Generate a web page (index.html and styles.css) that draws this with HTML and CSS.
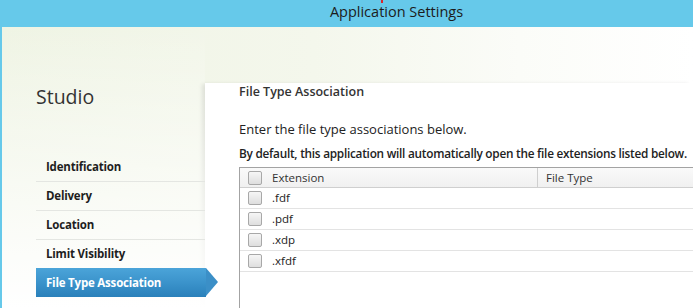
FILE: index.html
```html
<!DOCTYPE html>
<html lang="en">
<head>
    <meta charset="UTF-8">
    <title>Application Settings</title>
    <link rel="stylesheet" href="styles.css">
</head>
<body>
    <div class="titlebar">
        <span class="cursor-mark"></span>
        Application Settings
    </div>

    <div class="window">
        <!-- Menu lateral -->
        <div class="sidebar">
            <h1 class="studio">Studio</h1>
            <ul class="nav">
                <li class="nav-item">Identification</li>
                <li class="nav-item">Delivery</li>
                <li class="nav-item">Location</li>
                <li class="nav-item">Limit Visibility</li>
                <li class="nav-item selected">File Type Association</li>
            </ul>
        </div>

        <!-- Contenido -->
        <div class="content">
            <h2 class="section-title">File Type Association</h2>
            <p class="intro">Enter the file type associations below.</p>
            <p class="note">By default, this application will automatically open the file extensions listed below.</p>

            <div class="grid">
                <div class="grid-row header">
                    <div class="col-ext"><span class="check"></span>Extension</div>
                    <div class="col-type">File Type</div>
                </div>
                <div class="grid-row">
                    <div class="col-ext"><span class="check"></span>.fdf</div>
                    <div class="col-type"></div>
                </div>
                <div class="grid-row">
                    <div class="col-ext"><span class="check"></span>.pdf</div>
                    <div class="col-type"></div>
                </div>
                <div class="grid-row">
                    <div class="col-ext"><span class="check"></span>.xdp</div>
                    <div class="col-type"></div>
                </div>
                <div class="grid-row">
                    <div class="col-ext"><span class="check"></span>.xfdf</div>
                    <div class="col-type"></div>
                </div>
            </div>
        </div>
    </div>
</body>
</html>
```

FILE: styles.css
```css
body {
    margin: 0;
    padding: 0;
    width: 693px;
    height: 308px;
    overflow: hidden;
    font-family: "Open Sans", Arial, sans-serif;
    color: #2b2b2b;
    background: white;
}

.titlebar {
    position: relative;
    height: 27px;
    background-color: #66c9ea;
    color: #1c1c1c;
    font-size: 14.5px;
    line-height: 24px;
    text-align: center;
    padding-left: 100px;
    box-sizing: border-box;
}

.cursor-mark {
    position: absolute;
    left: 381px;
    top: 0;
    width: 2px;
    height: 3px;
    background: #d8262f;
}

.window {
    display: flex;
    height: 281px;
    border-left: 2px solid #66c9ea;
    background: linear-gradient(to right, #eff4e4 0%, #f4f7ec 45%, #fbfcf8 75%, #ffffff 100%);
}

.sidebar {
    position: relative;
    z-index: 2;
    width: 203px;
    flex-shrink: 0;
    padding-left: 34px;
    box-sizing: border-box;
    background: linear-gradient(to bottom, rgba(255,255,255,0) 0%, rgba(255,255,255,0.5) 50%, #ffffff 100%);
}

.studio {
    margin: 56px 0 0 0;
    font-size: 19.5px;
    font-weight: normal;
    color: #333;
    line-height: 28px;
}

.nav {
    list-style: none;
    margin: 42px 0 0 0;
    padding: 0;
}

.nav-item {
    position: relative;
    height: 28px;
    line-height: 28px;
    padding-left: 10px;
    font-size: 11.5px;
    letter-spacing: -0.2px;
    font-weight: bold;
    color: #1e1e1e;
    border-bottom: 1px solid #e4e6e2;
}

.nav-item.selected {
    margin-top: -1px;
    margin-right: -1px;
    height: 29px;
    line-height: 29px;
    border-bottom: none;
    color: white;
    background: linear-gradient(to bottom, #4ba4d9 0%, #3b93cb 50%, #2a80ba 100%);
}

.nav-item.selected::after {
    content: "";
    position: absolute;
    right: -12px;
    top: 0;
    border-top: 14.5px solid transparent;
    border-bottom: 14.5px solid transparent;
    border-left: 12px solid #3b8fc7;
}

.content {
    flex: 1;
    margin-top: 56px;
    padding-left: 34px;
    background: white;
    box-shadow: -4px 0 4px -1px rgba(0, 0, 0, 0.12);
    overflow: hidden;
}

.section-title {
    margin: 0;
    font-size: 12.5px;
    font-weight: 600;
    color: #333;
    line-height: 18px;
}

.intro {
    margin: 20px 0 0 0;
    font-size: 13px;
    line-height: 16px;
    color: #222;
}

.note {
    margin: 8px 0 0 0;
    font-size: 11.8px;
    font-weight: 600;
    letter-spacing: -0.25px;
    white-space: nowrap;
    line-height: 16px;
    color: #222;
}

.grid {
    margin-top: 6px;
    width: 520px;
    height: 200px;
    border-top: 1px solid #a3a3a3;
    border-left: 1px solid #a3a3a3;
}

.grid-row {
    display: flex;
    height: 20px;
    line-height: 20px;
    font-size: 11.5px;
    color: #222;
    border-bottom: 1px solid #e3e3e3;
}

.grid-row.header {
    height: 19px;
    line-height: 19px;
    background: linear-gradient(to bottom, #fafafa, #f0f0f0);
    border-bottom: 1px solid #cfcfcf;
    color: #333;
}

.col-ext {
    width: 298px;
    display: flex;
    align-items: center;
    padding-left: 8px;
    box-sizing: border-box;
}

.header .col-ext {
    border-right: 1px solid #cfcfcf;
}

.col-type {
    padding-left: 8px;
}

.check {
    width: 12px;
    height: 12px;
    margin-right: 10px;
    border: 1px solid #a8a8a8;
    border-radius: 2px;
    background: linear-gradient(to bottom, #f6f6f6, #dedede);
    flex-shrink: 0;
}
```
